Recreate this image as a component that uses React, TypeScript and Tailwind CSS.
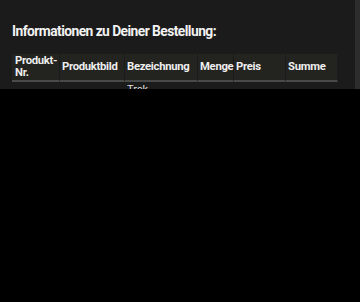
import React from "react";

const cols = [
  { label: "Produkt-Nr.", w: "w-[48px]" },
  { label: "Produktbild", w: "w-[65px]" },
  { label: "Bezeichnung", w: "w-[73px]" },
  { label: "Menge", w: "w-[36px]" },
  { label: "Preis", w: "w-[52px]" },
  { label: "Summe", w: "w-[52px]" },
];

export default function App() {
  return (
    <div className="w-[360px] h-[302px] bg-black" style={{ fontFamily: "Roboto, 'Noto Sans', sans-serif" }}>
      <div className="flex h-[89px] bg-[#1b1b1b]">
        <div className="flex-1 overflow-hidden pl-[12px] pt-[23px]">
          <h2 className="text-[13.8px] leading-[16px] font-bold tracking-[-0.55px] text-[#f2f2f2]">
            Informationen zu Deiner Bestellung:
          </h2>
          <div className="mt-[15px] flex w-[326px] bg-[#23231f]">
            {cols.map((c) => (
              <div
                key={c.label}
                className={`${c.w} h-[28px] flex items-center px-[2px] border-r border-[#1b1b1b] border-b-2 border-b-[#4a4a48] text-[11.3px] leading-[12px] font-bold tracking-[-0.3px] text-[#eeeeee]`}
              >
                {c.label === "Produkt-Nr." ? (
                  <span className="pl-px">
                    Produkt-
                    <br />
                    Nr.
                  </span>
                ) : (
                  c.label
                )}
              </div>
            ))}
          </div>
          <div className="flex w-[326px]">
            <div className="w-[113px]" />
            <div className="w-[73px] px-[2px] pt-[1px] text-[11px] leading-[13px] text-[#dddddd]">Trek</div>
          </div>
        </div>
        <div className="w-[5px] bg-[#2d2d2d]" />
      </div>
    </div>
  );
}
